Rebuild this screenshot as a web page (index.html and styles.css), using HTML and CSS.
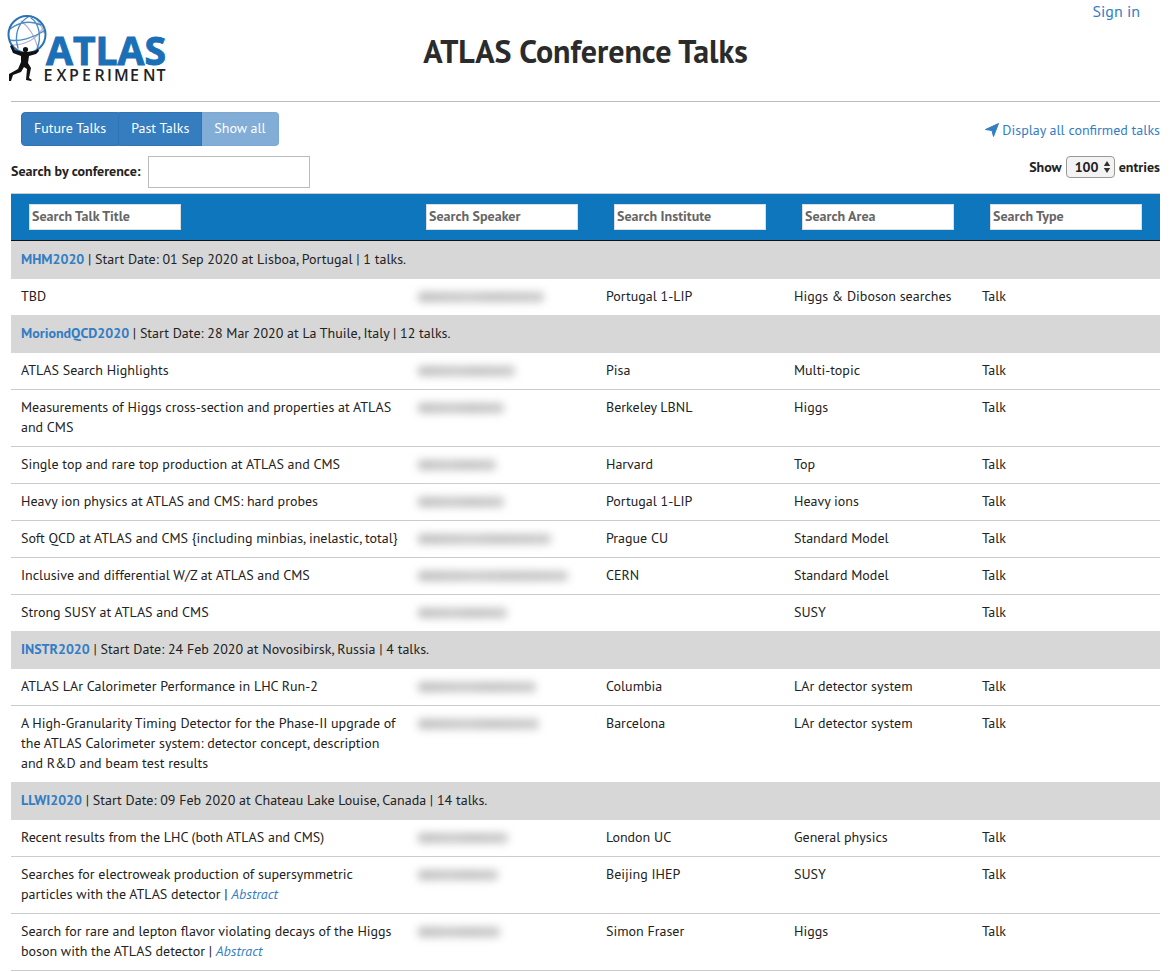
FILE: index.html
```html
<!DOCTYPE html>
<html lang="en">
<head>
<meta charset="utf-8">
<meta name="viewport" content="width=device-width, initial-scale=1">
<title>ATLAS Conference Talks</title>
<link rel="stylesheet" href="styles.css">
</head>
<body>
<header class="masthead">
  <svg class="logo" width="162" height="68" viewBox="0 0 162 68" role="img" aria-label="ATLAS Experiment">
    <g fill="none" stroke-linecap="round">
      <path d="M14 6C22 12 28 22 31 33M5 30C16 30 28 26 36 13M30 5C33 9 36 13 37 18" stroke="#b3aecb" stroke-width="1.200"/>
      <path d="M21 2C11 8 7 20 11 33M3 14C12 7 24 5 34 10M24 3C32 8 35 22 30 34M3 25C12 27 26 23 37 16" stroke="#4c8cc6" stroke-width="1.400"/>
      <circle cx="20" cy="19.500" r="18.500" stroke="#2a72b5" stroke-width="2"/>
    </g>
    <circle cx="18.500" cy="34.500" r="2.600" fill="#111"/>
    <path fill="#111" d="M3 31L5 30L8 35L15 37L21 37L28 36L31 34L32 36L29 39L22 41L21 48L24 53L23 58L22 63L25 65L24 66L19 65L20 54L17 52L14 57L6 60L4 66L2 66L2 59L11 54L14 47L14 41L6 38Z"/>
    <text class="logo-name" x="39" y="50">ATLAS</text>
    <text class="logo-sub" x="36.500 49.500 62 75 87.500 100 107 123 136 149.500" y="66">EXPERIMENT</text>
  </svg>
  <h1>ATLAS Conference Talks</h1>
  <a class="signin" href="#">Sign in</a>
</header>
<main>
  <section class="controls">
    <div class="filters">
      <div class="button-group">
        <button type="button">Future Talks</button>
        <button type="button">Past Talks</button>
        <button type="button" class="current">Show all</button>
      </div>
      <div class="conference">
        <label for="conference">Search by conference:</label>
        <input id="conference" type="text">
      </div>
    </div>
    <div class="listing">
      <a class="confirmed" href="#"><svg width="14" height="14" viewBox="0 0 14 14" aria-hidden="true"><path fill="currentColor" d="M13.500 .5L8.500 13.500L7 7.500L.5 6.500Z" stroke="currentColor" stroke-linejoin="round"/></svg>Display all confirmed talks</a>
      <label class="entries">Show
        <span class="picker"><select><option>100</option><option>50</option><option>25</option></select><svg width="8" height="12" viewBox="0 0 8 12" aria-hidden="true"><path fill="#333" d="M4 0L7.200 5H.8ZM4 12L.8 7H7.200Z"/></svg></span>
        entries</label>
    </div>
  </section>
  <table class="talks">
    <colgroup><col><col class="side"><col class="side"><col class="side"><col class="side"></colgroup>
    <thead>
      <tr>
        <th><input type="text" placeholder="Search Talk Title" aria-label="Search Talk Title"></th>
        <th><input type="text" placeholder="Search Speaker" aria-label="Search Speaker"></th>
        <th><input type="text" placeholder="Search Institute" aria-label="Search Institute"></th>
        <th><input type="text" placeholder="Search Area" aria-label="Search Area"></th>
        <th><input type="text" placeholder="Search Type" aria-label="Search Type"></th>
      </tr>
    </thead>
    <tbody>
      <tr class="group"><td colspan="5"><a href="#">MHM2020</a> | Start Date: 01 Sep 2020 at Lisboa, Portugal | 1 talks.</td></tr>
      <tr><td>TBD</td><td><span class="hidden-name" style="width:126px"></span></td><td>Portugal 1-LIP</td><td>Higgs &amp; Diboson searches</td><td>Talk</td></tr>
      <tr class="group"><td colspan="5"><a href="#">MoriondQCD2020</a> | Start Date: 28 Mar 2020 at La Thuile, Italy | 12 talks.</td></tr>
      <tr><td>ATLAS Search Highlights</td><td><span class="hidden-name" style="width:97px"></span></td><td>Pisa</td><td>Multi-topic</td><td>Talk</td></tr>
      <tr><td>Measurements of Higgs cross-section and properties at ATLAS and CMS</td><td><span class="hidden-name" style="width:86px"></span></td><td>Berkeley LBNL</td><td>Higgs</td><td>Talk</td></tr>
      <tr><td>Single top and rare top production at ATLAS and CMS</td><td><span class="hidden-name" style="width:78px"></span></td><td>Harvard</td><td>Top</td><td>Talk</td></tr>
      <tr><td>Heavy ion physics at ATLAS and CMS: hard probes</td><td><span class="hidden-name" style="width:86px"></span></td><td>Portugal 1-LIP</td><td>Heavy ions</td><td>Talk</td></tr>
      <tr><td>Soft QCD at ATLAS and CMS {including minbias, inelastic, total}</td><td><span class="hidden-name" style="width:133px"></span></td><td>Prague CU</td><td>Standard Model</td><td>Talk</td></tr>
      <tr><td>Inclusive and differential W/Z at ATLAS and CMS</td><td><span class="hidden-name" style="width:150px"></span></td><td>CERN</td><td>Standard Model</td><td>Talk</td></tr>
      <tr><td>Strong SUSY at ATLAS and CMS</td><td><span class="hidden-name" style="width:89px"></span></td><td></td><td>SUSY</td><td>Talk</td></tr>
      <tr class="group"><td colspan="5"><a href="#">INSTR2020</a> | Start Date: 24 Feb 2020 at Novosibirsk, Russia | 4 talks.</td></tr>
      <tr><td>ATLAS LAr Calorimeter Performance in LHC Run-2</td><td><span class="hidden-name" style="width:118px"></span></td><td>Columbia</td><td>LAr detector system</td><td>Talk</td></tr>
      <tr><td>A High-Granularity Timing Detector for the Phase-II upgrade of the ATLAS Calorimeter system: detector concept, description and R&amp;D and beam test results</td><td><span class="hidden-name" style="width:121px"></span></td><td>Barcelona</td><td>LAr detector system</td><td>Talk</td></tr>
      <tr class="group"><td colspan="5"><a href="#">LLWI2020</a> | Start Date: 09 Feb 2020 at Chateau Lake Louise, Canada | 14 talks.</td></tr>
      <tr><td>Recent results from the LHC (both ATLAS and CMS)</td><td><span class="hidden-name" style="width:90px"></span></td><td>London UC</td><td>General physics</td><td>Talk</td></tr>
      <tr><td>Searches for electroweak production of supersymmetric particles with the ATLAS detector | <a class="abstract" href="#">Abstract</a></td><td><span class="hidden-name" style="width:80px"></span></td><td>Beijing IHEP</td><td>SUSY</td><td>Talk</td></tr>
      <tr><td>Search for rare and lepton flavor violating decays of the Higgs boson with the ATLAS detector | <a class="abstract" href="#">Abstract</a></td><td><span class="hidden-name" style="width:82px"></span></td><td>Simon Fraser</td><td>Higgs</td><td>Talk</td></tr>
    </tbody>
  </table>
</main>
</body>
</html>
```
FILE: styles.css
```css
* { box-sizing: border-box; }
body {
  margin: 0;
  background: #fff;
  color: #222;
  font: 14px/20px "PT Sans", "Noto Sans", sans-serif;
}
a { color: #337dc4; text-decoration: none; }
input, select, button { font: inherit; color: inherit; }

.masthead {
  display: grid;
  grid-template-columns: 1fr auto 1fr;
  align-items: start;
  margin: 0 10px 0 11px;
  padding-bottom: 18px;
  border-bottom: 1px solid #bbb;
}
.logo { display: block; margin: 15px 0 0 -4px; overflow: visible; }
.logo-name { font: bold 39px "Open Sans", sans-serif; fill: #1a6fb7; stroke: #1a6fb7; stroke-width: 1px; }
.logo-sub { font: 600 16px "Open Sans", sans-serif; fill: #222; }
.masthead h1 {
  margin: 31px 0 0;
  font-size: 32px;
  line-height: 40px;
  color: #2b2b2b;
}
.signin { justify-self: end; margin: 1px 20px 0 0; font-size: 16px; }

main { margin: 0 10px 0 11px; }
.controls {
  display: flex;
  justify-content: space-between;
  padding: 10px 0 5px;
}
.button-group { display: flex; margin: 0 0 10px 10px; }
.button-group button {
  height: 34px;
  padding: 0 12px 2px;
  border: 1px solid #3174b5;
  border-left-width: 0;
  background: #367dc0;
  color: #fff;
}
.button-group button:first-child { border-left-width: 1px; border-radius: 4px 0 0 4px; }
.button-group button.current {
  border-color: #7ca9d3;
  border-radius: 0 4px 4px 0;
  background: #82add6;
}
.conference { display: flex; align-items: center; gap: 7px; font-weight: bold; }
.conference label { padding-bottom: 2px; }
.conference input { width: 162px; height: 32px; border: 1px solid #bbb; padding: 4px; }

.listing { display: flex; flex-direction: column; align-items: flex-end; padding-top: 8px; }
.confirmed { display: flex; align-items: center; gap: 3px; }
.entries { display: flex; align-items: center; gap: 4px; margin-top: 16px; font-weight: bold; }
.picker { position: relative; display: inline-flex; }
.picker select {
  appearance: none;
  width: 49px;
  height: 22px;
  padding: 0 0 0 8px;
  border: 1px solid #999;
  border-radius: 4px;
  background: #f3f3f3;
}
.picker svg { position: absolute; right: 4px; top: 5px; pointer-events: none; }

.talks {
  width: 100%;
  table-layout: fixed;
  border-collapse: separate;
  border-spacing: 0;
  border-top: 1px solid #ccc;
  border-bottom: 1px solid #ccc;
}
.side { width: 188px; }
.talks th {
  padding: 10px 18px;
  border-bottom: 1px solid #111;
  background: #0e76bd;
  text-align: left;
  line-height: 0;
}
.talks th input {
  width: 100%;
  max-width: 152px;
  height: 26px;
  padding: 0 2px 2px;
  border: 1px solid #ddd;
  background: #fff;
  font-weight: bold;
  line-height: 20px;
}
.talks th input::placeholder { color: #666; opacity: 1; }
.talks td { padding: 7px 10px 9px; border-top: 1px solid #ccc; vertical-align: top; }
.talks .group td { border-color: #d7d7d7; background: #d7d7d7; }
.group + tr td { border-color: #d7d7d7; }
.group a { font-weight: bold; }
.abstract { font-style: italic; }
.hidden-name {
  display: block;
  max-width: 100%;
  height: 10px;
  margin: 6px 0 4px;
  border-radius: 4px;
  background: linear-gradient(90deg, #bcbcbc, #c8c8c8 40%, #c0c0c0 60%, #c8c8c8);
  filter: blur(4px);
}
```
